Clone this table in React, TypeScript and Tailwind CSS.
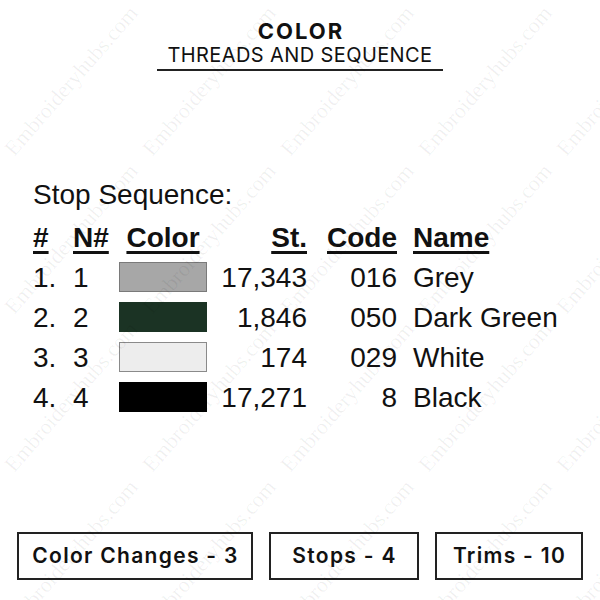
const rows = [
  { n: "1.", id: "1", color: "#a7a7a7", border: "border-[#7a7a7a]", st: "17,343", code: "016", name: "Grey" },
  { n: "2.", id: "2", color: "#1b3324", border: "border-[#1b3324]", st: "1,846", code: "050", name: "Dark Green" },
  { n: "3.", id: "3", color: "#ededed", border: "border-[#8a8a8a]", st: "174", code: "029", name: "White" },
  { n: "4.", id: "4", color: "#000000", border: "border-black", st: "17,271", code: "8", name: "Black" },
];

const totals = [
  { label: "Color Changes - 3", w: "w-[236px]" },
  { label: "Stops - 4", w: "w-[150px]" },
  { label: "Trims - 10", w: "w-[148px]" },
];

function Watermark() {
  const tiles = Array.from({ length: 20 });
  return (
    <div className="pointer-events-none absolute left-[2px] top-[1px] grid grid-cols-[repeat(5,138px)] grid-rows-[repeat(4,158px)]">
      {tiles.map((_, i) => (
        <div key={i} className="flex items-center justify-center">
          <span className="-rotate-[49deg] whitespace-nowrap font-['Liberation_Serif',serif] text-[22px] text-black/[0.06]">
            Embroideryhubs.com
          </span>
        </div>
      ))}
    </div>
  );
}

export default function App() {
  const head = "font-bold underline decoration-[2.5px] underline-offset-[4px]";
  return (
    <div className="relative h-[600px] w-[600px] overflow-hidden bg-white text-[#111]">
      <div className="flex flex-col">
        {/* title */}
        <div className="mt-[19px] flex flex-col items-center font-['Inter',sans-serif]">
          <div className="pl-[2px] text-[22px] font-bold leading-[24px] tracking-[2px]">COLOR</div>
          <div className="w-[286px] border-b-2 border-[#222] pb-[2px] text-center text-[20px] leading-[24px] tracking-[0.4px]">
            THREADS AND SEQUENCE
          </div>
        </div>

        {/* stop sequence */}
        <div className="mt-[104px] pl-[33px] font-['Liberation_Sans',Arial,sans-serif] text-[28px]">
          <div className="leading-[40px]">Stop Sequence:</div>
          <div className="mt-[3px] grid grid-cols-[40px_46px_88px_100px_90px_1fr] leading-[40px]">
            <div className={head}>#</div>
            <div className={head}>N#</div>
            <div className={`${head} text-center`}>Color</div>
            <div className={`${head} text-right`}>St.</div>
            <div className={`${head} text-right`}>Code</div>
            <div className={`${head} pl-[16px]`}>Name</div>
            {rows.map((r) => (
              <div key={r.id} className="contents">
                <div>{r.n}</div>
                <div>{r.id}</div>
                <div className="flex items-center">
                  <div
                    className={`h-[30px] w-[88px] -translate-y-[1px] border ${r.border}`}
                    style={{ backgroundColor: r.color }}
                  />
                </div>
                <div className="text-right">{r.st}</div>
                <div className="text-right">{r.code}</div>
                <div className="pl-[16px] whitespace-nowrap">{r.name}</div>
              </div>
            ))}
          </div>
        </div>

        {/* totals */}
        <div className="mt-[114px] flex justify-between pl-[17px] pr-[17px] font-['Inter',sans-serif]">
          {totals.map((t) => (
            <div
              key={t.label}
              className={`${t.w} flex h-[48px] items-center justify-center border-2 border-[#222] pl-[1px] text-[21px] font-semibold tracking-[1.3px]`}
            >
              {t.label}
            </div>
          ))}
        </div>
      </div>
      <Watermark />
    </div>
  );
}
